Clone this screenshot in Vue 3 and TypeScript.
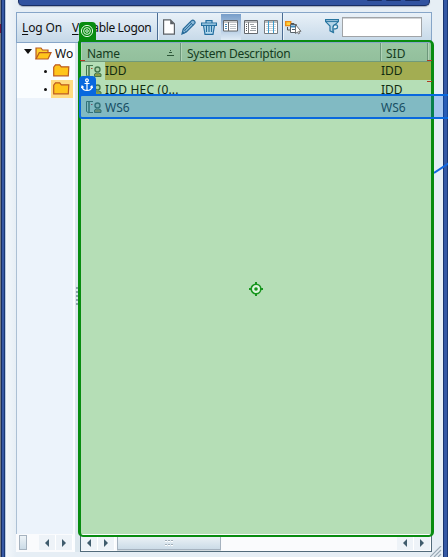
<script setup lang="ts">
interface SystemRow { name: string; sid: string; selected?: boolean; target?: boolean }
const rows: SystemRow[] = [
  { name: 'IDD', sid: 'IDD', selected: true },
  { name: 'IDD HEC (0...', sid: 'IDD' },
  { name: 'WS6', sid: 'WS6', target: true },
]
</script>

<template>
  <div class="window">
    <div class="edge left"><i></i></div>
    <main class="body">
      <div class="titlebar"><i></i><i></i><i></i></div>
      <div class="toolbar">
        <span class="logon"><u>L</u>og On</span>
        <span class="variable"><u>V</u>ariable Logon</span>
        <i class="divider"></i>
        <svg class="ic new" width="12" height="16" viewBox="0 0 12 16"><path d="M.6.8h6.8l4 4v10.4H.6z" fill="#fff" stroke="#5b6065" stroke-width="1.2" /><path d="M7.2.8v4.4h4.2z" fill="#5b6065" /></svg>
        <svg class="ic pencil" width="15" height="16" viewBox="0 0 15 16"><path d="M1 15l1.2-5L10.5 1.7q1.4-1.2 2.8.2t.3 2.7L5.3 13z" fill="#8bb9d9" stroke="#286b99" stroke-width="1.2" /><path d="M2.3 10l3 3M9 3.2l3.1 3.1M4 11l6.7-6.6" fill="none" stroke="#286b99" /><path d="M1 15l.7-3 2.2 2.3z" fill="#286b99" /></svg>
        <svg class="ic trash" width="16" height="15" viewBox="0 0 16 15"><path d="M.5 3h15v2.3H.5zM5 2.8V.7h6v2.1M2.5 5.5l.7 4 .8 4.8h8l.8-4.8.7-4" fill="#b7dcf0" stroke="#246f9f" stroke-width="1.2" /><path d="M5.5 6v6M8 6v6M10.5 6v6" stroke="#246f9f" stroke-width="1.2" /></svg>
        <span class="pressed">
          <svg width="15" height="12" viewBox="0 0 15 12"><path d="M.5.5h14v10.5H.5z" fill="#fff" stroke="#61666b" /><path d="M1 2h13" stroke="#8b8e91" /><path d="M5.5 2v9" stroke="#61666b" /><path d="M2 4.5h2M2 6.5h2M2 8.5h2" stroke="#4b8ebc" /><path d="M7 4.5h6M7 6.5h6M7 8.5h6" stroke="#bdc3c7" /></svg>
        </span>
        <svg class="ic list" width="14" height="14" viewBox="0 0 14 14"><path d="M.5.5h13v13H.5z" fill="#fff" stroke="#64696d" /><path d="M1 2h12M4.5 2v11" stroke="#777b7e" /><path d="M2 4.5h1M2 6.5h1M2 8.5h1M2 10.5h1" stroke="#555b60" /><path d="M6 4.5h4M7 6.5h5M7 8.5h5M6 10.5h6" stroke="#9ba1a5" /></svg>
        <svg class="ic columns" width="14" height="14" viewBox="0 0 14 14"><path d="M.5.5h13v13H.5z" fill="#fff" stroke="#777c80" /><path d="M1 2h12" stroke="#777c80" /><path d="M2 4.5h10M2 6.5h10M2 8.5h10M2 10.5h10" stroke="#d0d4d7" /><path d="M4.5 1v12M9.5 1v12" stroke="#3c9dce" /></svg>
        <i class="divider second"></i>
        <svg class="ic choose" width="17" height="15" viewBox="0 0 17 15"><path d="M.7 1.6h5v4h-5z" fill="#ffd43b" stroke="#ed8b13" stroke-width="1.4" /><path d="M2.5 7v3h3M6 3.5h3v2" fill="none" stroke="#555" /><path d="M5.5 4.5h6v8h-6z" fill="#fff" stroke="#59636b" /><path d="M6 6.5h5" stroke="#398ac0" stroke-width="2" /><path d="M7 9.5h3" stroke="#4f606e" /><path d="M10.5 4.5v9l2-1.5 1 2 1.2-.7-1-2h2.3z" fill="#fff" stroke="#555" stroke-width=".8" /></svg>
        <svg class="ic filter" width="14" height="15" viewBox="0 0 14 15"><path d="M.6.6h12.8v2L8.5 7v6.5L5 11.8V7L.6 2.6z" fill="#b5d5e9" stroke="#28759f" stroke-width="1.2" /><path d="M1 2.6h12" stroke="#28759f" /><path d="M8 13.5V8.2q.3-2.5 2.6-2.5 2 .2 2 2.1t-2 2.1H8.8" fill="#eaf5fa" stroke="#28759f" stroke-width="1.3" /></svg>
        <input class="search" aria-label="Filter">
      </div>

      <div class="panels">
        <aside class="tree">
          <div class="nodes">
            <div class="node root"><b></b><svg width="17" height="13" viewBox="0 0 17 13"><path d="M1 12V1h5l1.5 2H13v3" fill="#ffd02d" stroke="#b95a20" stroke-width="1.2" /><path d="M1 12L4.3 5.7H16L13 12z" fill="#ffc51b" stroke="#b95a20" stroke-width="1.2" /></svg><span>Wo</span></div>
            <div v-for="n in 2" :key="n" class="node child" :class="{ active: n === 2 }"><i></i><div class="folder"><svg width="17" height="13" viewBox="0 0 17 13"><path d="M.7 11.5V3.2L2.5.8h4.2l1.6 2h7.5l-.5 9H.7z" fill="#ffc51b" stroke="#bd5b1f" stroke-width="1.2" /></svg></div></div>
          </div>
          <div class="scroll treescroll"><i class="thumb"></i><span class="arrow"><b></b></span><span class="arrow next"><b></b></span></div>
        </aside>
        <div class="splitter"><i v-for="n in 5" :key="n"></i></div>
        <section class="tablewrap">
          <div class="head"><div class="cell first">Name<svg width="7" height="6" viewBox="0 0 7 6"><path d="M3 .5h1M2 2.5h3M0 5.5h7" stroke="#2d5739" /></svg></div><div class="cell description">System Description</div><div class="cell">SID</div><div class="cell"></div></div>
          <div class="rows">
            <div v-for="r in rows" :key="r.name" class="row" :class="{ selected: r.selected, target: r.target }">
              <span class="lead"><svg width="17" height="13" viewBox="0 0 17 13"><path d="M7 .5H.5v10L3 12V1M3 .5v11h4" fill="none" stroke="currentColor" /><path d="M5 3.5h1.5" stroke="#a54d2e" /><circle cx="11.5" cy="4.5" r="2.5" fill="#a9d0a5" stroke="currentColor" stroke-width="1.4" /><path d="M8.5 11.5V9l2-1 1 .7 1-.7 2.5 1v2.5z" fill="#8c9d48" stroke="currentColor" /></svg></span>
              <span class="name">{{ r.name }}</span><span class="sid">{{ r.sid }}</span>
            </div>
          </div>
          <div class="scroll tablescroll"><span class="arrow"><b></b></span><span class="arrow next"><b></b></span><i class="thumb"><em v-for="n in 6" :key="n"></em></i><span class="arrow far"><b></b></span><span class="arrow next"><b></b></span></div>
        </section>
      </div>
    </main>
    <div class="edge right"></div>
    <svg class="grip" width="12" height="11" viewBox="0 0 12 11"><path d="M0 11L11 0M4 11l7-7M8 11l3-3" stroke="#9baab6" stroke-width="1.2" /></svg>

    <div class="area"></div>
    <div class="marks"><i class="m1"></i><i class="m2"></i><i class="m3"></i></div>
    <div class="area-badge"><svg width="14" height="14" viewBox="0 0 14 14" fill="none" stroke="#dff5df"><circle cx="7" cy="7" r="5.6" /><circle cx="7" cy="7" r="3.4" /><circle cx="7" cy="7" r="1.3" /></svg></div>
    <svg class="center" width="14" height="14" viewBox="0 0 14 14"><circle cx="7" cy="7" r="4.8" fill="#dcf3dc" stroke="#16951d" stroke-width="1.6" /><circle cx="7" cy="7" r="1.8" fill="#16951d" /><path d="M7 0v2M7 12v2M0 7h2M12 7h2" stroke="#16951d" stroke-width="2" /></svg>
    <div class="anchor-area"></div>
    <div class="anchor-badge"><svg width="12" height="14" viewBox="0 0 12 14" fill="none" stroke="#fff" stroke-width="1.2"><circle cx="6" cy="2.3" r="1.4" /><path d="M6 4v8.5M3.5 5.5h5M1 8.5q.5 4 5 4t5-4M.3 10l.8-2 1.6 1.4M11.7 10l-.8-2-1.6 1.4" /></svg></div>
    <svg class="link" width="16" height="12" viewBox="0 0 16 12"><path d="M0 11L16 .5" stroke="#1467df" stroke-width="2" /></svg>
  </div>
</template>

<style>
body { overflow: hidden; }
</style>
<style scoped>
* { box-sizing: border-box; }
.window { position: relative; width: 448px; height: 557px; display: flex; overflow: hidden; background: #e8f0f7; font: 12px/18px "Noto Sans", sans-serif; color: #101010; }
.edge { flex: none; }
.left { width: 6px; background: linear-gradient(90deg, #767b83 0 1px, #172e60 1px 2px, #3759a5 2px 4px, #1a3773 4px 5px, #b9cbe0 5px); }
.left i { display: block; width: 1px; height: 9px; margin-top: 24px; background: #6b1839; }
.right { width: 5px; background: linear-gradient(90deg, #183571 0 1px, #3558a4 1px 4px, #1b3873 4px); }
.body { width: 437px; padding-left: 10px; background: linear-gradient(90deg, #f3f7fb, #e6eef5 10px); }
.titlebar { width: 412px; height: 6px; margin-left: 2px; background: #3152a0; border: 1px solid #182e65; border-top: 0; border-radius: 0 0 5px 5px; box-shadow: 0 1px 1px #a7afbd; display: flex; justify-content: flex-end; padding-right: 9px; gap: 4px; }
.titlebar i { width: 15px; height: 1px; background: #172b61; border-radius: 0 0 4px 4px; }
.toolbar { width: 416px; height: 31px; margin-top: 6px; border: 1px solid #86a5c8; display: flex; align-items: flex-start; background: linear-gradient(#e9f1f8, #c5d8e8); line-height: 18px; }
.logon, .variable { flex: none; white-space: nowrap; padding-top: 6px; letter-spacing: -.15px; }
.logon { width: 50px; padding-left: 5px; }
.variable { width: 90px; padding-left: 5px; letter-spacing: -.36px; }
u { text-underline-offset: 2px; }
.divider { flex: none; width: 1px; height: 29px; background: #4b6c93; box-shadow: 1px 0 #e9f3fb; }
.ic { flex: none; }
.new { margin: 6px 0 0 5px; }.pencil { margin: 6px 0 0 6px; }.trash { margin: 7px 0 0 5px; }
.pressed { flex: none; width: 20px; height: 26px; margin: 1px 0 0 4px; background: linear-gradient(#779dc9, #dfebf5); padding: 6px 0 0 2px; }
.pressed svg { display: block; }
.list { margin: 7px 0 0 3px; }.columns { margin: 7px 0 0 6px; }.second { margin-left: 4px; }
.choose { margin: 7px 0 0 2px; }.filter { margin: 6px 0 0 23px; }
.search { width: 80px; height: 20px; margin: 4px 0 0 3px; padding: 0; border: 1px solid #a1a4a7; outline: 0; background: #fff; box-shadow: inset 0 1px #d3d5d8; }
.panels { display: flex; height: 509px; }
.tree { width: 57px; height: 509px; flex: none; overflow: hidden; }
.nodes { height: 491px; border-left: 1px solid #acc0d4; background: #ecf3fb; }
.node { display: flex; height: 18px; background: #fafdff; align-items: center; overflow: hidden; }
.root { height: 19px; padding: 2px 0 0 7px; white-space: nowrap; }
.root b { border: 4px solid transparent; border-top: 5px solid #111; border-bottom: 0; margin-bottom: 4px; }
.root svg { flex: none; margin-left: 3px; margin-right: 3px; }
.child i { width: 3px; height: 3px; margin-left: 27px; margin-right: 4px; border-radius: 50%; background: #111; flex: none; }
.folder { width: 22px; height: 18px; padding: 2px 0 0 2px; flex: none; }
.folder svg { display: block; }
.active { height: 18px; }.active .folder { height: 18px; background: #ffdc83; }
.splitter { width: 7px; flex: none; border-left: 2px solid #fbfdff; background: #dce7ee; padding: 244px 0 0 1px; }
.splitter i { display: block; width: 2px; height: 2px; margin-bottom: 2px; background: #8ca2ad; }
.tablewrap { width: 352px; border: 1px solid #526b7b; border-top: 0; height: 509px; background: #b5deb6; }
.head { display: flex; height: 19px; background: linear-gradient(#9ac6a3, #92bf9c); color: #143c20; }
.cell { width: 200px; border-right: 1px solid #6c967a; padding: 2px 6px 0; height: 19px; line-height: 17px; border-bottom: 1px solid #709a7a; box-shadow: inset 1px 0 #b0d3b7; white-space: nowrap; }
.cell.first { width: 100px; display: flex; padding-left: 6px; letter-spacing: -.8px; letter-spacing: -.3px; }
.description { letter-spacing: -.28px; }
.first svg { margin: 5px 0 0 auto; }
.cell:nth-child(3) { width: 47px; padding-left: 5px; }.cell:last-child { width: 3px; padding: 0; border-right: 0; }
.rows { height: 472px; }
.row { display: flex; height: 18px; line-height: 18px; color: #102b10; }
.lead { width: 24px; padding: 3px 0 0 5px; color: #45784e; background: #b5deb6; }
.lead svg { display: block; }
.name { width: 275px; }.sid { flex: 1; padding-left: 1px; }
.row:nth-child(2) { height: 14px; overflow: hidden; line-height: 19px; }
.row:nth-child(2) .name { letter-spacing: .2px; }
.selected .name, .selected .sid { background: #a3ad52; }
.target { margin-top: 4px; line-height: 19px; color: #20442d; }
.scroll { height: 18px; display: flex; background: #fafbfd; }
.treescroll { padding: 1px 0 1px 3px; }
.thumb { display: block; flex: none; border: 1px solid #a5b2bf; background: linear-gradient(#edf3f7, #cbdbe7); }
.treescroll .thumb { width: 8px; height: 15px; margin-right: 12px; }
.arrow { width: 17px; height: 15px; background: #eef3f8; display: flex; justify-content: center; align-items: center; border-right: 1px solid #fff; flex: none; }
.arrow b { border: 4px solid transparent; border-right: 4px solid #405c6d; border-left: 0; }
.arrow.next b { border: 4px solid transparent; border-left: 4px solid #405c6d; border-right: 0; }
.tablescroll { height: 17px; padding-top: 1px; align-items: flex-start; overflow: hidden; }
.tablescroll .thumb { width: 104px; height: 15px; margin-left: 2px; padding: 4px 0 0 47px; display: grid; grid-template-columns: repeat(3, 3px); grid-auto-rows: 4px; box-shadow: 0 1px #d2d9de; }
em { width: 2px; height: 2px; background: #a2afb9; border-bottom: 1px solid #fff; }
.far { margin-left: auto; }
.grip { position: absolute; left: 430px; top: 546px; }
.marks i { position: absolute; height: 1px; width: 5px; background: #b13920; }
.m1 { left: 80px; top: 60px; }.m2 { left: 427px; top: 60px; }.m3 { left: 427px; top: 81px; }
.area { position: absolute; left: 78px; top: 40px; width: 356px; height: 497px; border: 2px solid #088c10; border-left-width: 3px; border-right-width: 3px; border-radius: 3px 5px 5px 5px; }
.area-badge { position: absolute; left: 79px; top: 22px; width: 17px; height: 19px; padding: 2px 1px; border-radius: 4px 4px 0 0; background: #088c10; }
.area-badge svg, .anchor-badge svg { display: block; }
.center { position: absolute; left: 249px; top: 282px; }
.anchor-area { position: absolute; left: 79px; top: 94px; width: 380px; height: 25px; border: 2px solid #0968de; border-radius: 3px; background: rgba(10, 102, 224, .3); }
.anchor-badge { position: absolute; left: 79px; top: 76px; width: 17px; height: 20px; padding: 2px 0 0 2px; background: #0968de; border-radius: 4px 4px 0 0; }
.link { position: absolute; left: 434px; top: 162px; }
</style>
